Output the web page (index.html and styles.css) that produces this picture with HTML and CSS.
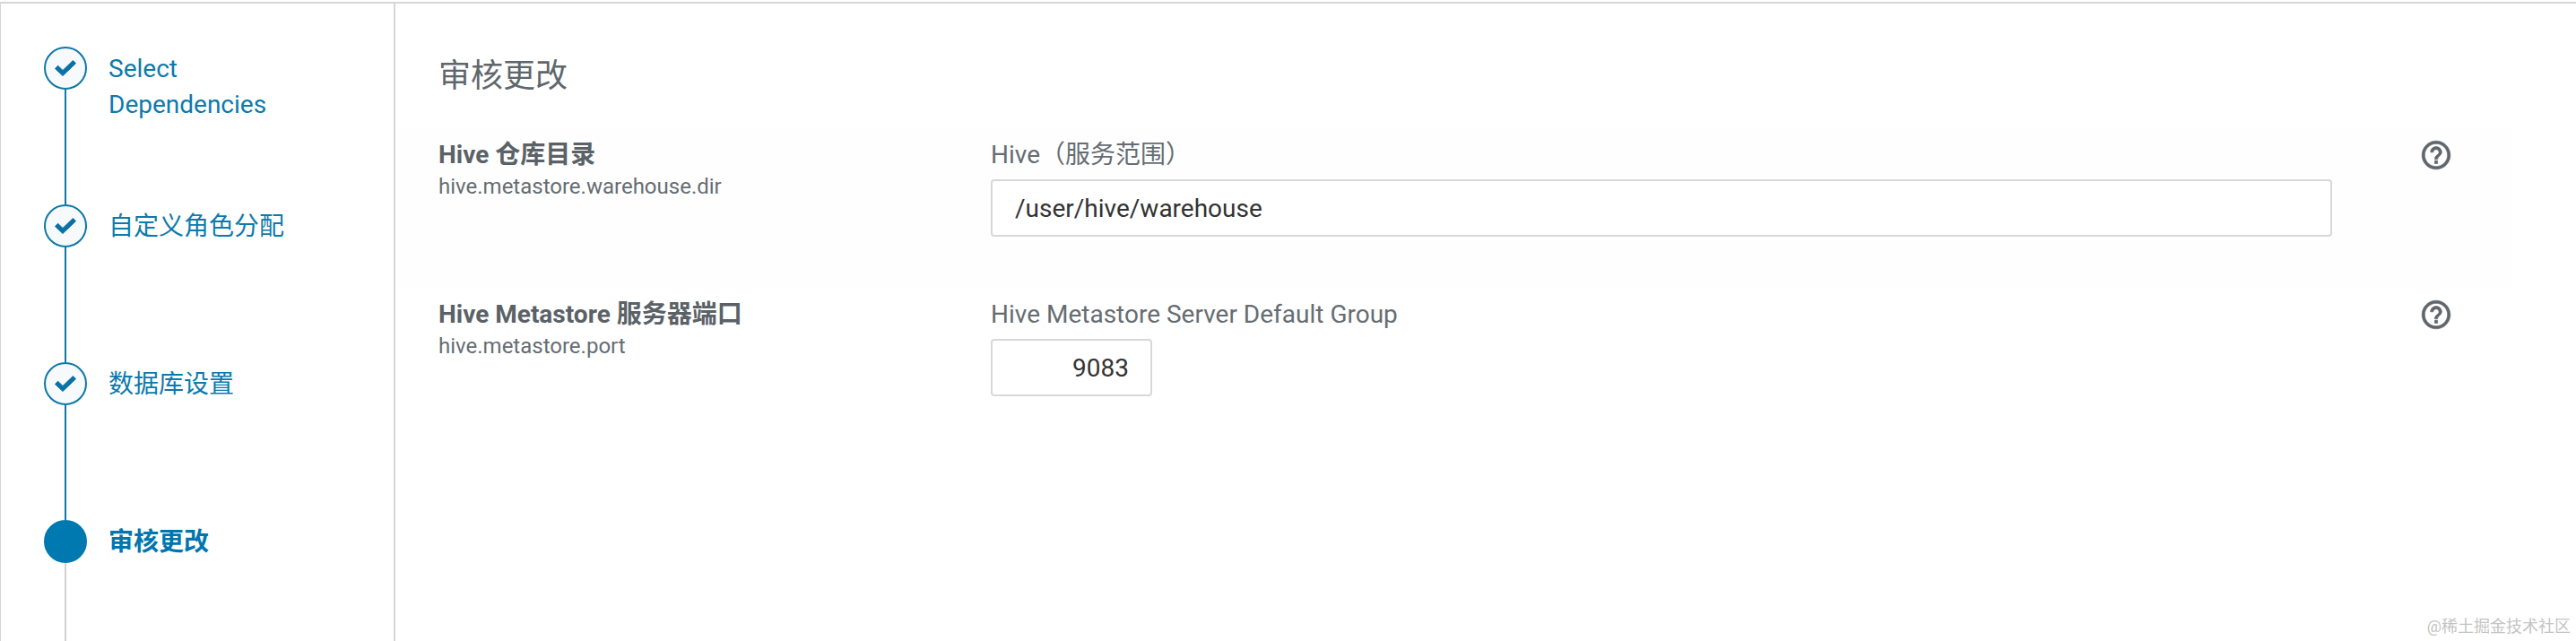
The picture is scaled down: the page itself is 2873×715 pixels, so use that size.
FILE: index.html
```html
<!DOCTYPE html>
<html lang="zh">
<head>
  <meta charset="UTF-8">
  <title>审核更改</title>
  <link rel="stylesheet" href="styles.css">
</head>
<body>

  <div class="wizard">
    <!-- 步骤 -->
    <div class="steps">
      <div class="step done">
        <div class="rail">
          <span class="dot"><svg viewBox="0 0 24 18"><path d="M0.5 9.500 3.600 6.300 9 11.500 20.400 0.500 23.500 3.700 9 17.500z"/></svg></span>
          <span class="line"></span>
        </div>
        <div class="step-name">Select Dependencies</div>
      </div>
      <div class="step done">
        <div class="rail">
          <span class="dot"><svg viewBox="0 0 24 18"><path d="M0.5 9.500 3.600 6.300 9 11.500 20.400 0.500 23.500 3.700 9 17.500z"/></svg></span>
          <span class="line"></span>
        </div>
        <div class="step-name">自定义角色分配</div>
      </div>
      <div class="step done">
        <div class="rail">
          <span class="dot"><svg viewBox="0 0 24 18"><path d="M0.5 9.500 3.600 6.300 9 11.500 20.400 0.500 23.500 3.700 9 17.500z"/></svg></span>
          <span class="line"></span>
        </div>
        <div class="step-name">数据库设置</div>
      </div>
      <div class="step active">
        <div class="rail">
          <span class="dot"></span>
          <span class="line"></span>
        </div>
        <div class="step-name">审核更改</div>
      </div>
    </div>

    <!-- 配置项 -->
    <div class="content">
      <h2>审核更改</h2>

      <div class="config-row shaded">
        <div class="config-name">
          <div class="title">Hive 仓库目录</div>
          <div class="key">hive.metastore.warehouse.dir</div>
        </div>
        <div class="config-value">
          <div class="scope">Hive&#xFF08;服务范围&#xFF09;</div>
          <input class="field" type="text" value="/user/hive/warehouse">
        </div>
        <svg class="help" viewBox="0 0 24 24"><path d="M11 18h2v-2h-2v2zm1-16C6.480 2 2 6.480 2 12s4.480 10 10 10 10-4.480 10-10S17.520 2 12 2zm0 18c-4.410 0-8-3.590-8-8s3.590-8 8-8 8 3.590 8 8-3.590 8-8 8zm0-14c-2.210 0-4 1.790-4 4h2c0-1.100.9-2 2-2s2 .9 2 2c0 2-3 1.750-3 5h2c0-2.250 3-2.500 3-5 0-2.210-1.790-4-4-4z"/></svg>
      </div>

      <div class="config-row">
        <div class="config-name">
          <div class="title">Hive Metastore 服务器端口</div>
          <div class="key">hive.metastore.port</div>
        </div>
        <div class="config-value">
          <div class="scope">Hive Metastore Server Default Group</div>
          <input class="field short" type="text" value="9083">
        </div>
        <svg class="help" viewBox="0 0 24 24"><path d="M11 18h2v-2h-2v2zm1-16C6.480 2 2 6.480 2 12s4.480 10 10 10 10-4.480 10-10S17.520 2 12 2zm0 18c-4.410 0-8-3.590-8-8s3.590-8 8-8 8 3.590 8 8-3.590 8-8 8zm0-14c-2.210 0-4 1.790-4 4h2c0-1.100.9-2 2-2s2 .9 2 2c0 2-3 1.750-3 5h2c0-2.250 3-2.500 3-5 0-2.210-1.790-4-4-4z"/></svg>
      </div>
    </div>
  </div>

  <div class="watermark">@稀土掘金技术社区</div>

</body>
</html>
```

FILE: styles.css
```css
html, body {
  height: 100%;
}

body {
  margin: 0;
  padding-top: 2px;
  box-sizing: border-box;
  background-color: #fff;
  font-family: Roboto, 'Noto Sans CJK SC', sans-serif;
  font-size: 28px;
  overflow: hidden;
}

.wizard {
  display: flex;
  height: 100%;
  border-top: 2px solid #d6d6d6;
  border-left: 1px solid #d6d6d6;
  box-sizing: border-box;
}

.steps {
  width: 440px;
  flex-shrink: 0;
  padding-top: 48px;
  padding-left: 48px;
  box-sizing: border-box;
  border-right: 2px solid #d6d6d6;
  display: flex;
  flex-direction: column;
}

.step {
  display: flex;
  height: 176px;
  gap: 24px;
  color: #0d7aac;
}

.step.active {
  flex: 1;
  font-weight: 700;
  color: #0076ae;
}

.rail {
  width: 48px;
  display: flex;
  flex-direction: column;
  align-items: center;
}

.dot {
  width: 48px;
  height: 48px;
  box-sizing: border-box;
  border: 2px solid #0e78a8;
  border-radius: 50%;
  background-color: #f6fafc;
  display: flex;
  justify-content: center;
  align-items: center;
  flex-shrink: 0;
}

.dot svg {
  width: 24px;
  height: 18px;
  fill: #0a72a5;
  stroke: #0a72a5;
  stroke-linejoin: round;
}

.active .dot {
  background-color: #0079b1;
  border-color: #0079b1;
}

.line {
  width: 2px;
  flex: 1;
  background-color: #0e78a8;
}

.active .line {
  background-color: #d2d2d2;
}

.step-name {
  width: 220px;
  line-height: 40px;
  padding-top: 5px;
}

.content {
  flex: 1;
  padding-right: 72px;
}

.content h2 {
  margin: 0;
  padding: 53px 0 0 48px;
  height: 139px;
  box-sizing: border-box;
  font-size: 36px;
  line-height: 56px;
  font-weight: 400;
  color: #5f676c;
}

.config-row {
  display: grid;
  grid-template-columns: 616px 1496px 1fr;
  height: 178px;
  padding: 10px 0 0 48px;
  box-sizing: border-box;
}

.config-row.shaded {
  background-color: #fefefe;
}

.title {
  font-weight: 700;
  line-height: 40px;
  color: #5a6267;
}

.key {
  font-size: 24px;
  line-height: 30px;
  color: #666d72;
}

.scope {
  line-height: 40px;
  color: #666d72;
  margin-bottom: 7px;
}

.field {
  display: block;
  width: 100%;
  height: 64px;
  padding: 0 25px;
  box-sizing: border-box;
  border: 2px solid #d8d8d8;
  border-radius: 4px;
  outline: none;
  font-family: inherit;
  font-size: 28px;
  color: #333;
  background-color: #fff;
}

.field.short {
  width: 180px;
  padding-right: 24px;
  text-align: right;
}

.help {
  width: 38px;
  height: 38px;
  fill: #5f666b;
  stroke: #5f666b;
  stroke-width: 0.4;
  margin: 1px 0 0 97px;
}

.watermark {
  position: absolute;
  right: 6px;
  bottom: 4px;
  font-size: 18px;
  line-height: 24px;
  color: #c4c4c4;
}
```
